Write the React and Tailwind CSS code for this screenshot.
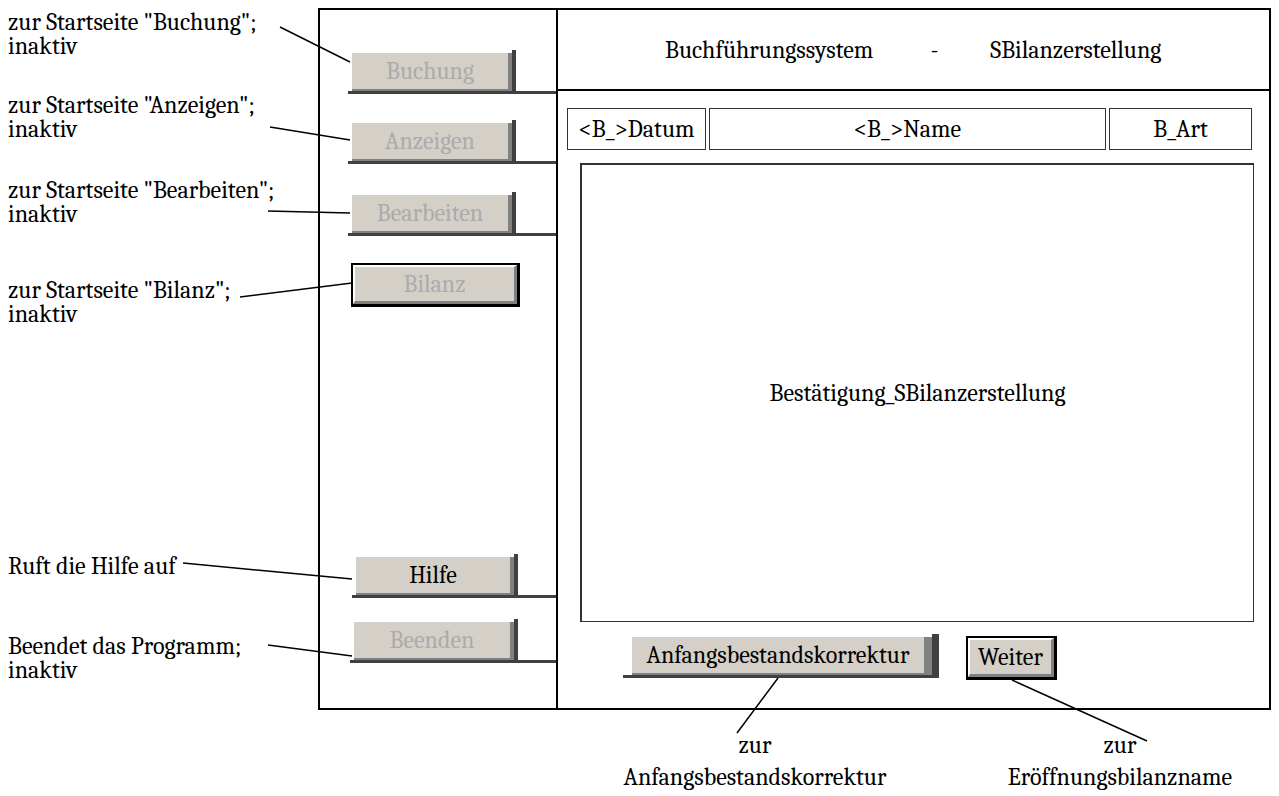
// flat button with the gray/dark L-shaped shadow on the right and bottom
const FlatButton = ({ label, disabled, padClass = 'pl-[4px]', faceClass, barClass = 'w-[4px]', className }) => (
  <div className={`flex flex-col items-start ${className}`}>
    <div className="flex">
      <div className={`pt-[3px] ${padClass}`}>
        <div
          className={`h-[38px] ${faceClass} flex items-center justify-center bg-[#d4d0c8] border-b-2 border-[#808080] ${
            disabled ? 'text-[#ababab]' : 'text-black'
          }`}
        >
          {label}
        </div>
      </div>
      <div className={`${barClass} bg-[#404040]`} />
    </div>
    <div className="h-[3px] self-stretch bg-[#404040]" />
  </div>
);

// default button: black frame around a raised bevel
const BevelButton = ({ label, disabled, sizeClass, className }) => (
  <div className={`${sizeClass} border-2 border-r-[3px] border-b-[3px] border-black ${className}`}>
    <div
      className={`h-full flex items-center justify-center bg-[#d4d0c8] border-t-2 border-l-2 border-t-white border-l-white border-r-[3px] border-b-[3px] border-r-[#808080] border-b-[#808080] ${
        disabled ? 'text-[#ababab]' : 'text-black'
      }`}
    >
      {label}
    </div>
  </div>
);

const Note = ({ lines, className }) => (
  <div className={`leading-[24px] ${className}`}>
    {lines.map((l) => (
      <div key={l}>{l}</div>
    ))}
  </div>
);

export default function App() {
  return (
    <div className="relative w-[1279px] h-[796px] overflow-hidden bg-white text-black text-[24px] font-serif">
      <div className="flex">
        {/* annotations on the left */}
        <div className="w-[318px] pl-[8px] flex flex-col">
          <Note className="mt-[10px]" lines={['zur Startseite "Buchung";', 'inaktiv']} />
          <Note className="mt-[35px]" lines={['zur Startseite "Anzeigen";', 'inaktiv']} />
          <Note className="mt-[37px]" lines={['zur Startseite "Bearbeiten";', 'inaktiv']} />
          <Note className="mt-[52px]" lines={['zur Startseite "Bilanz";', 'inaktiv']} />
          <Note className="mt-[228px]" lines={['Ruft die Hilfe auf']} />
          <Note className="mt-[56px]" lines={['Beendet das Programm;', 'inaktiv']} />
        </div>

        <div className="flex flex-col">
          {/* window frame */}
          <div className="mt-[8px] w-[953px] h-[702px] border-2 border-black flex">
            {/* navigation column */}
            <div className="w-[238px] border-r-2 border-black flex flex-col pl-[28px]">
              <FlatButton className="mt-[40px]" label="Buchung" disabled faceClass="w-[160px] border-r-4" />
              <FlatButton className="mt-[26px]" label="Anzeigen" disabled faceClass="w-[160px] border-r-4" />
              <FlatButton className="mt-[28px]" label="Bearbeiten" disabled faceClass="w-[160px] border-r-4" />
              <BevelButton className="mt-[27px] ml-[3px]" label="Bilanz" disabled sizeClass="w-[169px] h-[44px]" />
              <FlatButton className="mt-[247px] ml-[4px]" label="Hilfe" faceClass="w-[158px] border-r-4" />
              <FlatButton className="mt-[21px] ml-[2px]" label="Beenden" disabled faceClass="w-[160px] border-r-4" />
            </div>

            {/* content */}
            <div className="flex-1 flex flex-col">
              <div className="h-[81px] border-b-2 border-black flex items-center pl-[107px]">
                <span>Buchführungssystem</span>
                <span className="ml-[57px]">-</span>
                <span className="ml-[52px]">SBilanzerstellung</span>
              </div>

              <div className="mt-[17px] ml-[9px] h-[42px] flex gap-[3px]">
                <div className="w-[139px] border border-[#333] flex items-center justify-center">&lt;B_&gt;Datum</div>
                <div className="w-[397px] border border-[#333] flex items-center justify-center">&lt;B_&gt;Name</div>
                <div className="w-[143px] border border-[#333] flex items-center justify-center">B_Art</div>
              </div>

              <div className="mt-[13px] ml-[22px] w-[674px] h-[459px] border border-t-2 border-l-2 border-[#333] flex items-center justify-center">
                Bestätigung_SBilanzerstellung
              </div>

              <div className="mt-[12px] ml-[65px] flex items-start">
                <FlatButton
                  label="Anfangsbestandskorrektur"
                  padClass="pl-[9px]"
                  faceClass="w-[300px] border-r-8"
                  barClass="w-[7px]"
                />
                <BevelButton className="mt-[2px] ml-[27px]" label="Weiter" sizeClass="w-[91px] h-[44px]" />
              </div>
            </div>
          </div>

          {/* annotations below */}
          <div className="flex mt-[19px] leading-[32px] text-center">
            <div className="ml-[287px] w-[300px]">
              <div>zur</div>
              <div>Anfangsbestandskorrektur</div>
            </div>
            <div className="ml-[65px] w-[300px]">
              <div>zur</div>
              <div>Eröffnungsbilanzname</div>
            </div>
          </div>
        </div>
      </div>

      {/* connector lines */}
      <svg className="absolute inset-0 pointer-events-none" width="1279" height="796" viewBox="0 0 1279 796">
        <g stroke="#000" strokeWidth="1.5" fill="none">
          <line x1="280" y1="27" x2="350" y2="62" />
          <line x1="270" y1="127" x2="350" y2="140" />
          <line x1="268" y1="211" x2="350" y2="213" />
          <line x1="240" y1="297" x2="352" y2="283" />
          <line x1="183" y1="563" x2="352" y2="579" />
          <line x1="268" y1="645" x2="352" y2="656" />
          <line x1="778" y1="678" x2="737" y2="733" />
          <line x1="1012" y1="680" x2="1147" y2="741" />
        </g>
      </svg>
    </div>
  );
}
